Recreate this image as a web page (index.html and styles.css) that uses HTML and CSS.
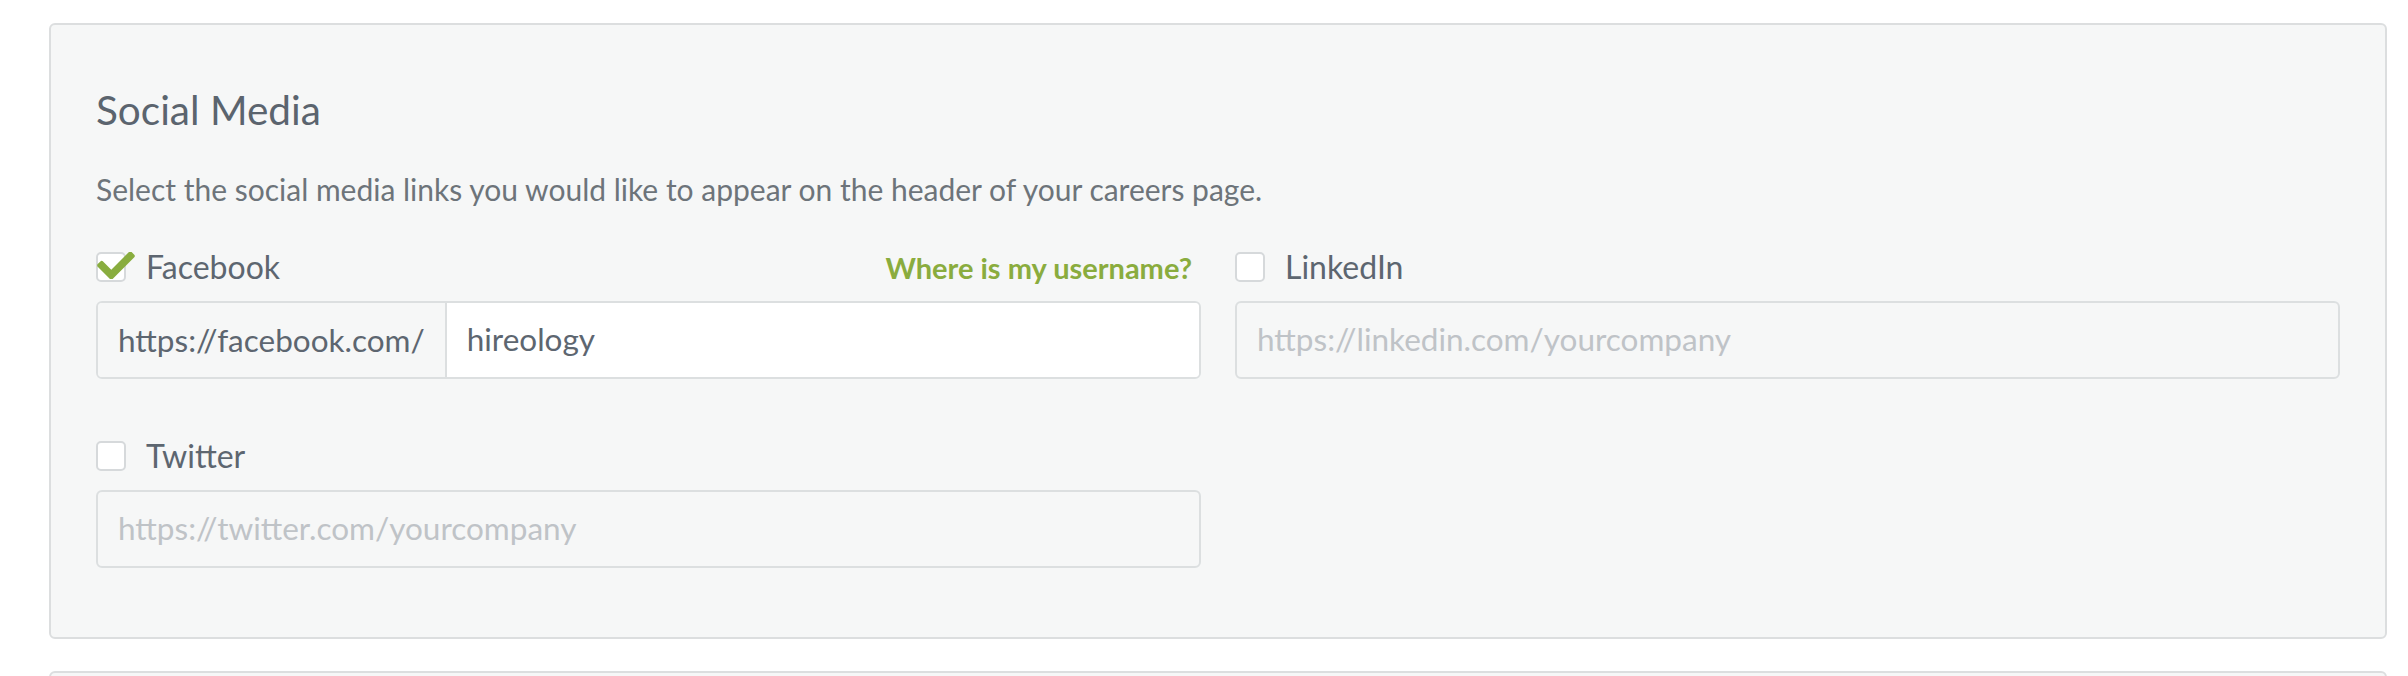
FILE: index.html
```html
<!DOCTYPE html>
<html lang="en">
<head>
<meta charset="utf-8">
<title>Social Media</title>
<link rel="stylesheet" href="styles.css">
</head>
<body>
<div class="page">
  <section class="card">
    <h2 class="card-title">Social Media</h2>
    <p class="card-desc">Select the social media links you would like to appear on the header of your careers page.</p>
    <div class="grid">
      <div class="field">
        <div class="field-head">
          <label class="check">
            <span class="box checked">
              <svg class="tick" viewBox="0 0 512 367" aria-hidden="true"><path d="M173.9 359.4l-166.4-166.4c-10-10-10-26.2 0-36.2l36.2-36.2c10-10 26.2-10 36.2 0L192 232.7 432.1-7.4c10-10 26.2-10 36.2 0l36.2 36.2c10 10 10 26.2 0 36.2l-294.4 294.4c-10 10-26.2 10-36.2 0z" transform="translate(0 7.4)"/></svg>
            </span>
            <span class="check-text">Facebook</span>
          </label>
          <a class="help-link" href="#">Where is my username?</a>
        </div>
        <div class="input-group">
          <span class="addon">https://facebook.com/</span>
          <span class="input value">hireology</span>
        </div>
      </div>
      <div class="field">
        <div class="field-head">
          <label class="check">
            <span class="box"></span>
            <span class="check-text">LinkedIn</span>
          </label>
        </div>
        <div class="input disabled placeholder">https://linkedin.com/yourcompany</div>
      </div>
      <div class="field">
        <div class="field-head">
          <label class="check">
            <span class="box"></span>
            <span class="check-text">Twitter</span>
          </label>
        </div>
        <div class="input disabled placeholder">https://twitter.com/yourcompany</div>
      </div>
    </div>
  </section>
  <section class="card next"></section>
</div>
</body>
</html>
```
FILE: styles.css
```css
* { box-sizing: border-box; }
html, body { margin: 0; padding: 0; background: #ffffff; }
body {
  font-family: Lato, "Open Sans", "Liberation Sans", sans-serif;
  color: #5d6670;
  overflow: hidden;
}
.page {
  padding: 23px 21px 0 49px;
}
.card {
  background: #f6f7f7;
  border: 2px solid #dcdedf;
  border-radius: 6px;
  padding: 61px 45px 69px 45px;
}
.card.next {
  margin-top: 32px;
  height: 80px;
  padding: 0;
}
.card-title {
  margin: 0;
  font-size: 40.5px;
  font-weight: 400;
  line-height: 1.2;
  color: #5b646e;
}
.card-desc {
  margin: 36px 0 0 0;
  font-size: 30px;
  line-height: 1.2;
  color: #6d747a;
}
.grid {
  margin-top: 42px;
  display: grid;
  grid-template-columns: 1fr 1fr;
  column-gap: 34px;
  row-gap: 59px;
}
.field {
  display: flex;
  flex-direction: column;
  gap: 15px;
}
.field-head {
  display: flex;
  align-items: center;
  justify-content: space-between;
  height: 37px;
}
.check {
  display: flex;
  align-items: center;
  gap: 20px;
}
.box {
  position: relative;
  width: 30px;
  height: 30px;
  background: #ffffff;
  border: 2px solid #d6d9db;
  border-radius: 5px;
  flex: none;
}
.tick {
  position: absolute;
  left: -1px;
  top: -2px;
  width: 38px;
  height: 27px;
  fill: #89ad3f;
}
.check-text {
  font-size: 32px;
  line-height: 1.15;
  color: #5d6670;
}
.help-link {
  font-size: 29px;
  font-weight: 700;
  color: #8aac3e;
  text-decoration: none;
  padding-right: 9px;
}
.input-group {
  display: flex;
  height: 78px;
  border: 2px solid #dcdfe0;
  border-radius: 6px;
  overflow: hidden;
}
.addon {
  display: flex;
  align-items: center;
  padding: 0 20px;
  background: #f6f7f7;
  border-right: 2px solid #dcdfe0;
  font-size: 31.5px;
  color: #5d6670;
  white-space: nowrap;
}
.input {
  display: flex;
  align-items: center;
  height: 78px;
  padding: 0 20px;
  font-size: 31.5px;
  line-height: 1.2;
}
.input-group .input {
  flex: 1;
  height: auto;
  background: #ffffff;
  color: #5d6670;
}
.input.disabled {
  border: 2px solid #dcdfe0;
  border-radius: 6px;
  background: #f6f7f7;
}
.placeholder { color: #bfc3c7; }
```
